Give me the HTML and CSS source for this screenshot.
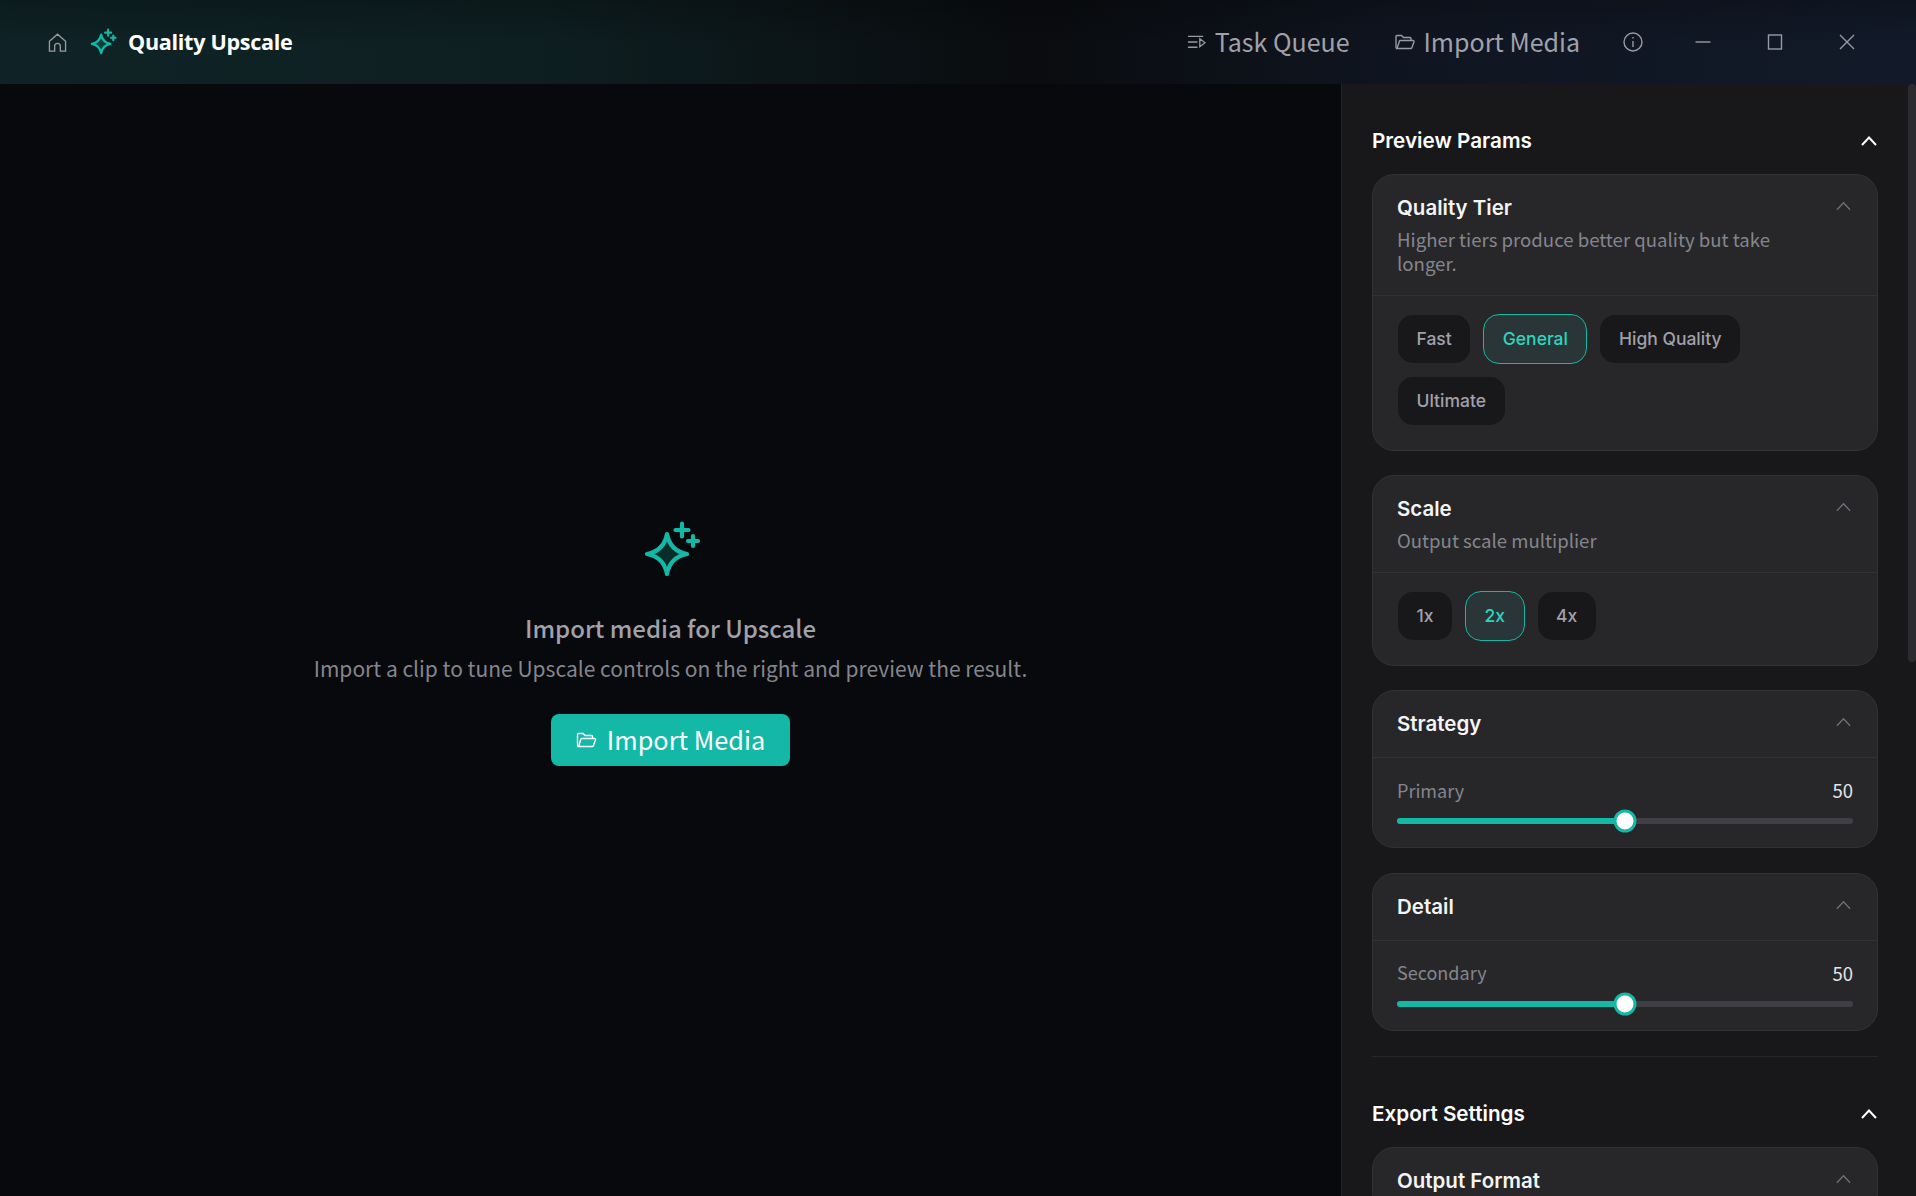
FILE: index.html
```html
<!DOCTYPE html>
<html lang="en">
<head>
  <meta charset="UTF-8" />
  <title>Quality Upscale</title>
  <link rel="stylesheet" href="styles.css">
</head>
<body>
  <svg class="defs" width="0" height="0">
    <symbol id="sparkle" viewBox="0 0 60 60">
      <path class="sparkle-star" d="M26 14 C28 25 35 32 46 34 C35 36 28 43 26 54 C24 43 17 36 6 34 C17 32 24 25 26 14 Z"/>
      <path d="M41 3.5 V16.5 M34.5 10 H47.5 M52 16 V26 M47 21 H57"/>
    </symbol>
    <symbol id="folder" viewBox="0 0 20 16">
      <path d="M2 14.5 A1 1 0 0 1 1 13.5 V2.5 A1 1 0 0 1 2 1.5 H6.5 L8.5 3.5 H15 A1 1 0 0 1 16 4.5 V6.5"/>
      <path d="M2 14.5 L4.4 7.2 A1 1 0 0 1 5.3 6.5 H18 A1 1 0 0 1 19 7.8 L16.9 13.8 A1 1 0 0 1 16 14.5 Z"/>
    </symbol>
    <symbol id="chevron" viewBox="0 0 16 10">
      <path d="M1 9 L8 1.5 L15 9"/>
    </symbol>
  </svg>

  <div class="app">
    <header class="titlebar">
      <svg class="icon home-icon" viewBox="0 0 20 20">
        <path d="M1.5 8.8 L10 1.2 L18.5 8.8 V19 H13 V14 A3 3 0 0 0 7 14 V19 H1.5 Z"/>
      </svg>
      <svg class="sparkle sparkle-small"><use href="#sparkle"/></svg>
      <span class="app-title">Quality Upscale</span>

      <div class="titlebar-actions">
        <div class="bar-link">
          <svg class="icon queue-icon" viewBox="0 0 20 16">
            <path d="M1 2 H17 M1 8 H11 M1 13.5 H11 M13.5 4.5 L19 8.8 L13.5 13 Z"/>
          </svg>
          <span>Task Queue</span>
        </div>
        <div class="bar-link">
          <svg class="icon folder-icon"><use href="#folder"/></svg>
          <span>Import Media</span>
        </div>
        <svg class="icon info-icon" viewBox="0 0 20 20">
          <circle cx="10" cy="10" r="9"/>
          <path d="M10 9 V15 M10 5 V6.6"/>
        </svg>
        <svg class="icon win-icon" viewBox="0 0 16 16"><path d="M0.5 8 H15.5"/></svg>
        <svg class="icon win-icon" viewBox="0 0 16 16"><rect x="1.5" y="1" width="13" height="14"/></svg>
        <svg class="icon win-icon" viewBox="0 0 16 16"><path d="M1 1 L15 15 M15 1 L1 15"/></svg>
      </div>
    </header>

    <div class="workspace">
      <main class="stage">
        <svg class="sparkle sparkle-large"><use href="#sparkle"/></svg>
        <h1 class="stage-title">Import media for Upscale</h1>
        <p class="stage-text">Import a clip to tune Upscale controls on the right and preview the result.</p>
        <button class="import-btn">
          <svg class="icon btn-icon"><use href="#folder"/></svg>
          <span>Import Media</span>
        </button>
      </main>

      <aside class="panel">
        <div class="scroll-thumb"></div>
        <div class="panel-inner">
          <section class="group">
            <div class="group-head">
              <h2>Preview Params</h2>
              <svg class="group-chevron"><use href="#chevron"/></svg>
            </div>

            <div class="card">
              <div class="card-head">
                <div class="card-heading">
                  <h3>Quality Tier</h3>
                  <p>Higher tiers produce better quality but take longer.</p>
                </div>
                <svg class="card-chevron"><use href="#chevron"/></svg>
              </div>
              <div class="card-body chips">
                <button class="chip">Fast</button>
                <button class="chip active">General</button>
                <button class="chip">High Quality</button>
                <button class="chip">Ultimate</button>
              </div>
            </div>

            <div class="card">
              <div class="card-head">
                <div class="card-heading">
                  <h3>Scale</h3>
                  <p>Output scale multiplier</p>
                </div>
                <svg class="card-chevron"><use href="#chevron"/></svg>
              </div>
              <div class="card-body chips">
                <button class="chip">1x</button>
                <button class="chip active">2x</button>
                <button class="chip">4x</button>
              </div>
            </div>

            <div class="card">
              <div class="card-head">
                <div class="card-heading">
                  <h3>Strategy</h3>
                </div>
                <svg class="card-chevron"><use href="#chevron"/></svg>
              </div>
              <div class="card-body slider-body">
                <div class="slider-label"><span>Primary</span><b>50</b></div>
                <div class="slider">
                  <div class="slider-fill" style="width: 50%"></div>
                  <div class="slider-thumb" style="left: 50%"></div>
                </div>
              </div>
            </div>

            <div class="card">
              <div class="card-head">
                <div class="card-heading">
                  <h3>Detail</h3>
                </div>
                <svg class="card-chevron"><use href="#chevron"/></svg>
              </div>
              <div class="card-body slider-body">
                <div class="slider-label"><span>Secondary</span><b>50</b></div>
                <div class="slider">
                  <div class="slider-fill" style="width: 50%"></div>
                  <div class="slider-thumb" style="left: 50%"></div>
                </div>
              </div>
            </div>
          </section>

          <section class="group group-next">
            <div class="group-head">
              <h2>Export Settings</h2>
              <svg class="group-chevron"><use href="#chevron"/></svg>
            </div>
            <div class="card">
              <div class="card-head">
                <div class="card-heading">
                  <h3>Output Format</h3>
                </div>
                <svg class="card-chevron"><use href="#chevron"/></svg>
              </div>
            </div>
          </section>
        </div>
      </aside>
    </div>
  </div>
</body>
</html>
```

FILE: styles.css
```css
html, body {
  margin: 0;
  padding: 0;
  height: 100%;
  overflow: hidden;
  background: #08090c;
  font-family: "Noto Sans CJK SC", "Noto Sans", sans-serif;
}

h1, h2, h3, p {
  margin: 0;
}

.defs {
  position: absolute;
}

.app {
  display: flex;
  flex-direction: column;
  height: 100%;
}

/* title bar */
.titlebar {
  flex: none;
  display: flex;
  align-items: center;
  height: 84px;
  padding: 0 61px 0 48px;
  box-sizing: border-box;
  background:
    linear-gradient(180deg, rgba(0, 0, 0, 0.22) 0%, rgba(0, 0, 0, 0) 55%),
    linear-gradient(90deg, #0f2326 0%, #0e1f21 28%, #0a0c0f 54%, #0f1520 72%, #121a29 100%);
}

.icon {
  fill: none;
  stroke: #9a9aa2;
  stroke-width: 1.4;
  flex: none;
}

.home-icon {
  width: 19px;
  height: 19px;
}

.sparkle {
  flex: none;
  fill: none;
  stroke: #14b8a6;
  stroke-linecap: round;
  stroke-linejoin: round;
}

.sparkle-star {
  fill: rgba(20, 184, 166, 0.2);
}

.sparkle-small {
  width: 28px;
  height: 28px;
  margin-left: 22px;
  stroke-width: 4.6;
}

.app-title {
  margin-left: 11px;
  padding-bottom: 2px;
  font-family: "Open Sans", sans-serif;
  font-size: 21.6px;
  font-weight: 700;
  letter-spacing: -0.3px;
  color: #fff;
}

.titlebar-actions {
  display: flex;
  align-items: center;
  margin-left: auto;
}

.bar-link {
  display: flex;
  align-items: center;
  gap: 9px;
  margin-right: 45px;
  font-size: 25px;
  color: #a1a1aa;
}

.bar-link span {
  padding-bottom: 2px;
}

.queue-icon {
  width: 19px;
  height: 16px;
}

.folder-icon {
  width: 20px;
  height: 16px;
}

.info-icon {
  width: 20px;
  height: 20px;
  margin-left: -2px;
  margin-right: -4px;
}

.win-icon {
  width: 16px;
  height: 16px;
  margin-left: 56px;
}

/* main area */
.workspace {
  flex: 1;
  display: flex;
  min-height: 0;
}

.stage {
  flex: 1;
  display: flex;
  flex-direction: column;
  align-items: center;
  justify-content: center;
  padding-top: 6px;
  background: #08090c;
}

.sparkle-large {
  width: 60px;
  height: 60px;
  stroke-width: 4.2;
}

.stage-title {
  margin-top: 30px;
  font-size: 24px;
  line-height: 36px;
  font-weight: 500;
  color: #a1a1aa;
}

.stage-text {
  margin-top: 7px;
  font-size: 21px;
  line-height: 30px;
  color: #85858d;
}

.import-btn {
  display: flex;
  align-items: center;
  justify-content: center;
  gap: 10px;
  width: 239px;
  height: 52px;
  margin-top: 31px;
  padding: 0;
  border: none;
  border-radius: 8px;
  background: #14b8a6;
  color: #fff;
  font-family: inherit;
  font-size: 25.3px;
}

.import-btn span {
  padding-bottom: 3px;
}

.btn-icon {
  width: 21px;
  height: 16px;
  stroke: #fff;
}

/* settings panel */
.panel {
  position: relative;
  flex: none;
  width: 575px;
  box-sizing: border-box;
  border-left: 1px solid #1e2530;
  background: #18181b;
  overflow: hidden;
}

.scroll-thumb {
  position: absolute;
  top: 0;
  right: 0;
  width: 8px;
  height: 578px;
  border-radius: 4px;
  background: #2c2c30;
}

.panel-inner {
  box-sizing: border-box;
  padding: 45px 38px 0 30px;
}

.group {
  display: flex;
  flex-direction: column;
  gap: 24.5px;
}

.group-next {
  margin-top: 25.5px;
  padding-top: 45px;
  border-top: 1px solid #27272a;
}

.group-head {
  display: flex;
  align-items: center;
  justify-content: space-between;
  height: 24px;
  margin-bottom: -3.5px;
  padding-right: 1px;
}

.group-head h2 {
  padding-bottom: 2px;
  font-family: Inter, sans-serif;
  font-size: 20.7px;
  font-weight: 600;
  color: #fff;
}

.group-chevron {
  width: 16px;
  height: 10px;
  fill: none;
  stroke: #fff;
  stroke-width: 2;
}

.card {
  box-sizing: border-box;
  border: 1px solid #323236;
  border-radius: 22px;
  background: #27272a;
}

.card-head {
  display: flex;
  align-items: flex-start;
  justify-content: space-between;
  box-sizing: border-box;
  min-height: 66px;
  padding: 21px 26px 20px 24px;
}

.card-head + .card-body {
  border-top: 1px solid #323236;
}

.card-heading {
  width: 400px;
}

.card-heading h3 {
  font-family: Inter, sans-serif;
  font-size: 20.5px;
  line-height: 24px;
  font-weight: 600;
  color: #f4f4f5;
}

.card-heading p {
  margin-top: 7px;
  font-size: 18.6px;
  line-height: 24px;
  color: #85858d;
}

.card-chevron {
  width: 15px;
  height: 10px;
  margin-top: 5px;
  fill: none;
  stroke: #71717a;
  stroke-width: 1.3;
}

.chips {
  display: flex;
  flex-wrap: wrap;
  gap: 12px;
  padding: 18px 24px 23.5px;
}

.chip {
  height: 50px;
  padding: 0 18.5px 1px;
  box-sizing: border-box;
  border: 1px solid transparent;
  background: #18181b;
  background-clip: padding-box;
  border-radius: 16px;
  color: #a1a1aa;
  font-family: Inter, sans-serif;
  font-size: 17.5px;
  font-weight: 500;
}

.chip.active {
  border-color: #14b8a6;
  background: #2a3537;
  color: #2dd4bf;
}

.slider-body {
  padding: 21px 24px 14px;
}

.slider-label {
  display: flex;
  align-items: center;
  justify-content: space-between;
  height: 24px;
  font-size: 18.5px;
  color: #85858d;
}

.slider-label span {
  padding-bottom: 3px;
  font-size: 18px;
}

.slider-label b {
  padding-bottom: 2px;
  font-weight: 400;
  color: #e4e4e7;
}

.slider {
  position: relative;
  height: 6px;
  margin-top: 15px;
  margin-bottom: 9px;
  border-radius: 3px;
  background: #3f3f46;
}

.slider-fill {
  height: 100%;
  border-radius: 3px;
  background: #14b8a6;
}

.slider-thumb {
  position: absolute;
  top: 50%;
  width: 23px;
  height: 23px;
  box-sizing: border-box;
  border: 3px solid #14b8a6;
  border-radius: 50%;
  background: #fff;
  transform: translate(-50%, -50%);
}
```
